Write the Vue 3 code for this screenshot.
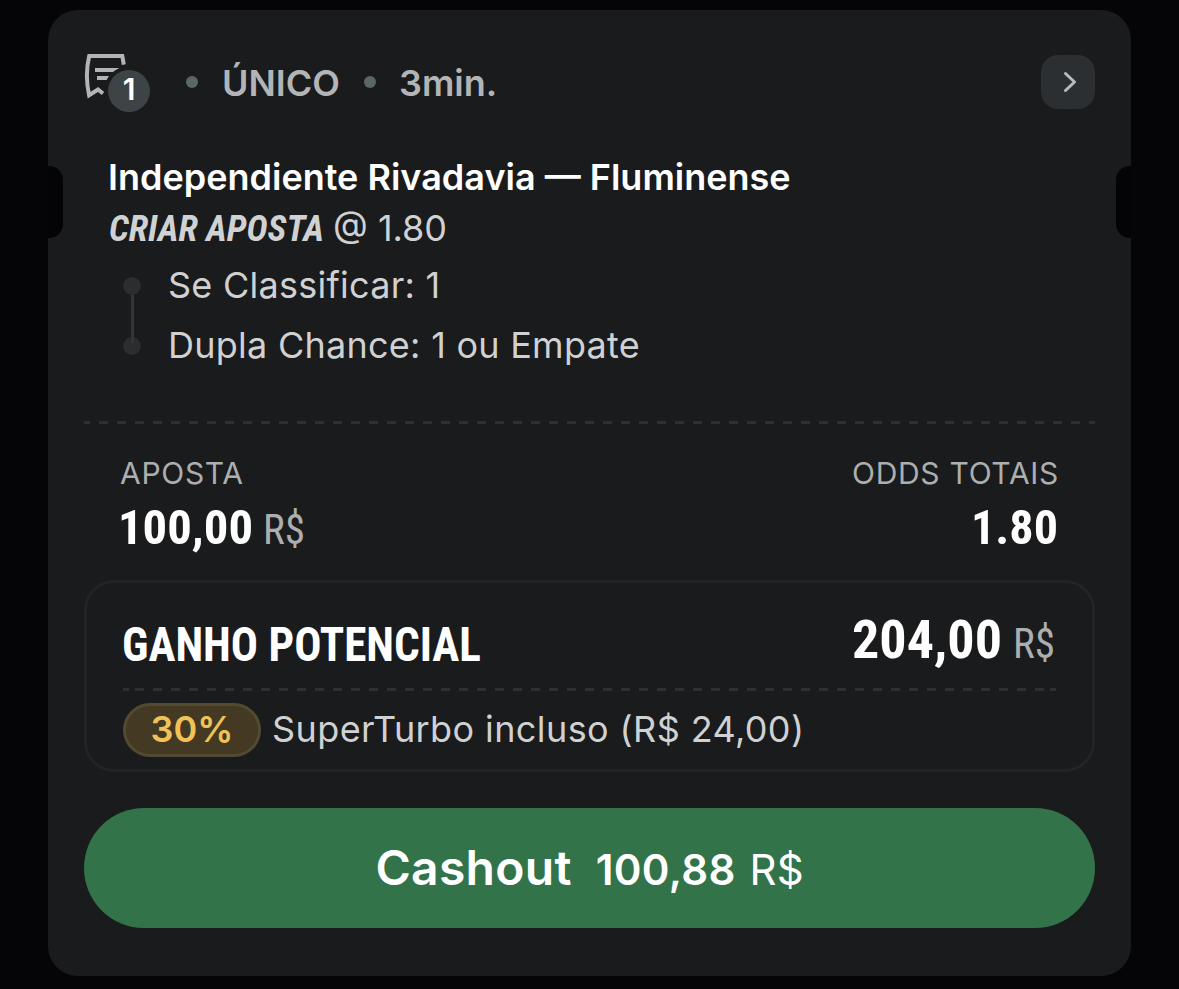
<script setup>
const bet = {
    count: 1,
    type: 'ÚNICO',
    time: '3min.',
    match: 'Independiente Rivadavia — Fluminense',
    odds: '1.80',
    picks: ['Se Classificar: 1', 'Dupla Chance: 1 ou Empate'],
    stake: '100,00',
    gain: '204,00',
    boost: '30%',
    boostText: 'SuperTurbo incluso (R$ 24,00)',
    cashout: '100,88'
}
</script>

<template>
    <main class="page">
        <article class="card">
            <header class="head">
                <div class="ticket">
                    <svg width="66" height="60" viewBox="0 0 66 60">
                        <g fill="none" stroke="#b3b4b6" stroke-width="4">
                            <path d="M39.8 12.6 38.3 4H5.2Q.6 23 5.1 43.2L14 37.5 19 41.5" />
                            <path d="M11 18H36M13 26H28" />
                        </g>
                        <circle cx="45" cy="39" r="25" fill="#191b1c" />
                        <circle cx="45" cy="39" r="21" fill="#3e4446" />
                    </svg>
                    <span class="count">{{ bet.count }}</span>
                </div>
                <i class="dot first"></i>
                <span class="type">{{ bet.type }}</span>
                <i class="dot"></i>
                <span class="time">{{ bet.time }}</span>
                <button class="open" aria-label="Abrir">
                    <svg width="54" height="54" viewBox="0 0 54 54">
                        <path d="M24.5 18.5 33.5 27 24.5 35.5" fill="none" stroke="#b9babc" stroke-width="3" stroke-linecap="round" stroke-linejoin="round" />
                    </svg>
                </button>
            </header>

            <section class="match">
                <h1>{{ bet.match }}</h1>
                <div class="kind">
                    <svg class="cond" width="225" height="51">
                        <text class="criar" x="1" y="38" textLength="215" lengthAdjust="spacingAndGlyphs">CRIAR APOSTA</text>
                    </svg>
                    <span>@ {{ bet.odds }}</span>
                </div>
                <ul>
                    <li v-for="pick in bet.picks" :key="pick">{{ pick }}</li>
                </ul>
            </section>

            <div class="divider"></div>

            <section class="stats">
                <div>
                    <p class="label">APOSTA</p>
                    <svg class="cond" width="200" height="60">
                        <text class="value" x="-2" y="47" textLength="135" lengthAdjust="spacingAndGlyphs">{{ bet.stake }}</text>
                        <text class="currency" x="143" y="47" textLength="42" lengthAdjust="spacingAndGlyphs">R$</text>
                    </svg>
                </div>
                <div class="right">
                    <p class="label">ODDS TOTAIS</p>
                    <svg class="cond" width="90" height="60">
                        <text class="value" x="3" y="47" textLength="87" lengthAdjust="spacingAndGlyphs">{{ bet.odds }}</text>
                    </svg>
                </div>
            </section>

            <section class="gain">
                <div class="gain-row">
                    <svg class="cond" width="370" height="85">
                        <text class="title" x="-1" y="61" textLength="359" lengthAdjust="spacingAndGlyphs">GANHO POTENCIAL</text>
                    </svg>
                    <svg class="cond" width="210" height="85">
                        <text class="total" x="6" y="58" textLength="150" lengthAdjust="spacingAndGlyphs">{{ bet.gain }}</text>
                        <text class="currency" x="167" y="58" textLength="42" lengthAdjust="spacingAndGlyphs">R$</text>
                    </svg>
                </div>
                <div class="gain-divider"></div>
                <div class="boost">
                    <span class="pill">{{ bet.boost }}</span>
                    <span class="boost-text">{{ bet.boostText }}</span>
                </div>
            </section>

            <button class="cashout">
                <strong>Cashout</strong>
                <span class="amount">{{ bet.cashout }}</span>
                <span class="unit">R$</span>
            </button>
        </article>
    </main>
</template>

<style>
body {
    margin: 0;
    background-color: #050507;
}
</style>

<style scoped>
.page {
    box-sizing: border-box;
    height: 989px;
    padding: 10px 48px 0;
    overflow: hidden;
    background-color: #050507;
    font-family: Inter, "Liberation Sans", sans-serif;
    font-size: 36px;
    color: #d0d1d2;
}

.card {
    position: relative;
    box-sizing: border-box;
    height: 966px;
    padding: 45px 36px 0;
    border-radius: 30px;
    background-color: #191b1c;
}

/* 양쪽 홈 */
.card::before,
.card::after {
    content: '';
    position: absolute;
    top: 156px;
    width: 15px;
    height: 72px;
    background-color: #040406;
}

.card::before {
    left: 0;
    border-radius: 0 14px 14px 0;
}

.card::after {
    right: 0;
    border-radius: 14px 0 0 14px;
}

.head {
    display: flex;
    align-items: center;
    height: 54px;
    color: #b3b4b6;
    font-weight: 600;
    white-space: nowrap;
}

.type,
.time {
    padding-top: 2px;
}

.time {
    margin-left: -1px;
}

.ticket {
    position: relative;
    width: 66px;
    height: 60px;
}

.ticket svg {
    display: block;
}

.count {
    position: absolute;
    left: 24px;
    top: 16px;
    width: 42px;
    line-height: 42px;
    font-size: 30px;
    text-align: center;
    color: #fff;
}

.dot {
    width: 12px;
    height: 12px;
    margin: 0 24px;
    border-radius: 50%;
    background-color: #5b6669;
}

.dot.first {
    margin-left: 36px;
}

.open {
    width: 54px;
    height: 54px;
    margin-left: auto;
    padding: 0;
    border: none;
    border-radius: 17px;
    background-color: #2b2f32;
}

.open svg,
.cond {
    display: block;
    overflow: visible;
}

.match {
    box-sizing: border-box;
    height: 269px;
    padding: 43px 24px 0;
    white-space: nowrap;
}

h1 {
    margin: 0;
    font-size: 36px;
    font-weight: 600;
    line-height: 51px;
    color: #fff;
}

.kind {
    display: flex;
    line-height: 51px;
}

ul {
    position: relative;
    margin: 1px 0 0;
    padding: 0;
    list-style: none;
}

ul::after {
    content: '';
    position: absolute;
    left: 23px;
    top: 40px;
    width: 3px;
    height: 48px;
    background-color: #343537;
}

li {
    display: flex;
    align-items: center;
    gap: 27px;
    height: 60px;
    padding-left: 15px;
    letter-spacing: 0.26px;
}

li::before {
    content: '';
    width: 18px;
    height: 18px;
    margin-top: 1px;
    border-radius: 50%;
    background-color: #2c2d2f;
}

.divider {
    height: 3px;
    margin-top: 43px;
    background: repeating-linear-gradient(90deg, #2e2f31 0 6px, transparent 6px 15px, #2e2f31 15px 18px);
}

.stats {
    display: flex;
    justify-content: space-between;
    height: 156px;
    padding: 31px 37px 0 36px;
    box-sizing: border-box;
}

.right {
    display: flex;
    flex-direction: column;
    align-items: flex-end;
}

.label {
    margin: 0;
    font-size: 30px;
    line-height: 36px;
    letter-spacing: 0.7px;
    color: #adaeaf;
}

.right .label {
    margin-right: -1px;
}

.stats .cond {
    margin-top: 6px;
}

.cond text {
    font-family: "Roboto Condensed", Roboto, sans-serif;
    font-stretch: 75%;
    font-weight: 700;
    fill: #fff;
}

.cond .criar {
    font-size: 36px;
    font-style: italic;
    fill: #d0d1d2;
}

.cond .value {
    font-size: 49px;
}

.cond .title {
    font-size: 48px;
}

.cond .total {
    font-size: 54px;
}

.cond .currency {
    font-size: 42px;
    font-weight: 400;
    fill: #adaeaf;
}

.gain {
    box-sizing: border-box;
    height: 192px;
    padding: 17px 36px 0;
    border: 3px solid #222426;
    border-radius: 30px;
}

.gain-row {
    display: flex;
    justify-content: space-between;
    height: 88px;
}

.gain-divider {
    height: 3px;
    background:
        linear-gradient(#2e2f31, #2e2f31) left / 6px 100% no-repeat,
        linear-gradient(#2e2f31, #2e2f31) right / 6px 100% no-repeat,
        repeating-linear-gradient(90deg, #2e2f31 0 9px, transparent 9px 18px) center / 909px 100% no-repeat;
}

.boost {
    display: flex;
    align-items: center;
    margin-top: 12px;
    white-space: nowrap;
}

.pill {
    box-sizing: border-box;
    width: 138px;
    height: 54px;
    margin-right: 11px;
    border: 3px solid #524a31;
    border-radius: 27px;
    background-color: #443a23;
    font-weight: 600;
    line-height: 46px;
    text-align: center;
    color: #f1c257;
}

.boost-text {
    padding-bottom: 2px;
    letter-spacing: 0.4px;
}

.cashout {
    display: flex;
    align-items: baseline;
    justify-content: center;
    width: 100%;
    height: 120px;
    margin-top: 36px;
    padding: 0;
    border: none;
    border-radius: 60px;
    background-color: #32734a;
    font-family: inherit;
    font-size: 42px;
    line-height: 120px;
    color: #fff;
}

.cashout strong {
    font-size: 48px;
    font-weight: 600;
    letter-spacing: 0.3px;
}

.amount {
    margin: 0 14px 0 24px;
    font-weight: 600;
    letter-spacing: 0.3px;
}
</style>
